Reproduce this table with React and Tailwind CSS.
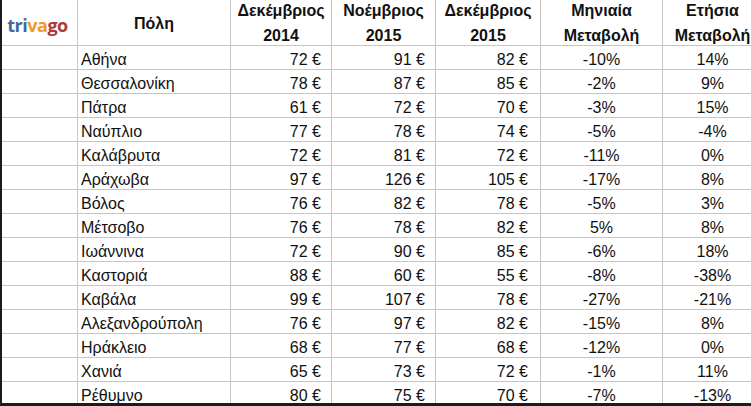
import React from 'react'

const ROWS = [
  ['Αθήνα', 72, 91, 82, '-10%', '14%'],
  ['Θεσσαλονίκη', 78, 87, 85, '-2%', '9%'],
  ['Πάτρα', 61, 72, 70, '-3%', '15%'],
  ['Ναύπλιο', 77, 78, 74, '-5%', '-4%'],
  ['Καλάβρυτα', 72, 81, 72, '-11%', '0%'],
  ['Αράχωβα', 97, 126, 105, '-17%', '8%'],
  ['Βόλος', 76, 82, 78, '-5%', '3%'],
  ['Μέτσοβο', 76, 78, 82, '5%', '8%'],
  ['Ιωάννινα', 72, 90, 85, '-6%', '18%'],
  ['Καστοριά', 88, 60, 55, '-8%', '-38%'],
  ['Καβάλα', 99, 107, 78, '-27%', '-21%'],
  ['Αλεξανδρούπολη', 76, 97, 82, '-15%', '8%'],
  ['Ηράκλειο', 68, 77, 68, '-12%', '0%'],
  ['Χανιά', 65, 73, 72, '-1%', '11%'],
  ['Ρέθυμνο', 80, 75, 70, '-7%', '-13%'],
]

// column widths taken from the grid lines in the screenshot
const COLS = 'grid grid-cols-[76px_153px_101px_104px_105px_122px_100px]'
const cell = 'h-[24px] border-b border-r border-[#c6c6c6] flex items-center pt-[4px] leading-none'
const head = 'h-[46px] border-b border-r border-[#c6c6c6] flex items-center justify-center text-center font-bold leading-[25px] pt-[1px]'

function Logo() {
  return (
    <span
      className="font-bold text-[18px] tracking-[-0.5px] leading-none pt-[3px] pr-[4px]"
      style={{ fontFamily: '"Open Sans", sans-serif' }}
    >
      <span className="text-[#43689f]">tri</span>
      <span className="text-[#ef9a2c]">va</span>
      <span className="text-[#ad3b35]">go</span>
    </span>
  )
}

export default function App() {
  return (
    <div
      className="w-[751px] h-[406px] overflow-hidden bg-white border-l-2 border-b-[3px] border-[#1c1c1c] text-[16px] text-[#111]"
      style={{ fontFamily: '"Liberation Sans", Arial, sans-serif' }}
    >
      <div className={COLS}>
        <div className={head}>
          <Logo />
        </div>
        <div className={head}>Πόλη</div>
        <div className={head}>
          Δεκέμβριος
          <br />
          2014
        </div>
        <div className={head}>
          Νοέμβριος
          <br />
          2015
        </div>
        <div className={head}>
          Δεκέμβριος
          <br />
          2015
        </div>
        <div className={head}>
          Μηνιαία
          <br />
          Μεταβολή
        </div>
        <div className={head}>
          Ετήσια
          <br />
          Μεταβολή
        </div>
      </div>
      {ROWS.map(([city, a, b, c, m, y]) => (
        <div key={city} className={COLS}>
          <div className={cell} />
          <div className={`${cell} pl-[3px]`}>{city}</div>
          <div className={`${cell} justify-end pr-[10px]`}>{a} €</div>
          <div className={`${cell} justify-end pr-[10px]`}>{b} €</div>
          <div className={`${cell} justify-end pr-[12px]`}>{c} €</div>
          <div className={`${cell} justify-center`}>{m}</div>
          <div className={`${cell} justify-center`}>{y}</div>
        </div>
      ))}
    </div>
  )
}
